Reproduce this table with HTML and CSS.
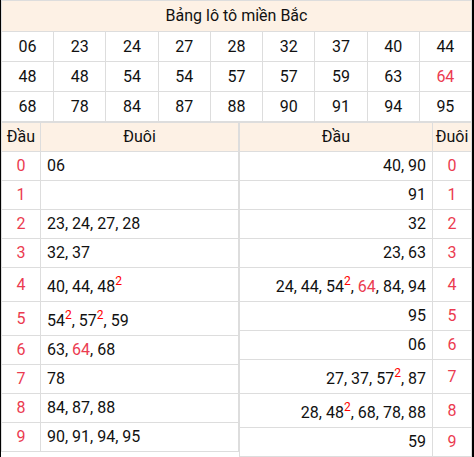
FILE: index.html
```html
<!doctype html>
<html lang="vi">
<head>
	<meta charset="UTF-8">
	<title>Bảng lô tô miền Bắc</title>
	<link rel="stylesheet" href="styles.css">
</head>
<body>
	<div class="loto">
		<table class="loto-grid">
			<tr><th colspan="9" class="loto-title">Bảng lô tô miền Bắc</th></tr>
			<tr><td>06</td><td>23</td><td>24</td><td>27</td><td>28</td><td>32</td><td>37</td><td>40</td><td>44</td></tr>
			<tr><td>48</td><td>48</td><td>54</td><td>54</td><td>57</td><td>57</td><td>59</td><td>63</td><td class="hot">64</td></tr>
			<tr><td>68</td><td>78</td><td>84</td><td>87</td><td>88</td><td>90</td><td>91</td><td>94</td><td>95</td></tr>
		</table>
		<div class="loto-split">
			<table class="loto-head">
				<tr><th class="digit">Đầu</th><th>Đuôi</th></tr>
				<tr><td class="digit">0</td><td>06</td></tr>
				<tr><td class="digit">1</td><td>&nbsp;</td></tr>
				<tr><td class="digit">2</td><td>23, 24, 27, 28</td></tr>
				<tr><td class="digit">3</td><td>32, 37</td></tr>
				<tr><td class="digit">4</td><td>40, 44, 48<sup>2</sup></td></tr>
				<tr><td class="digit">5</td><td>54<sup>2</sup>, 57<sup>2</sup>, 59</td></tr>
				<tr><td class="digit">6</td><td>63, <span class="hot">64</span>, 68</td></tr>
				<tr><td class="digit">7</td><td>78</td></tr>
				<tr><td class="digit">8</td><td>84, 87, 88</td></tr>
				<tr><td class="digit">9</td><td>90, 91, 94, 95</td></tr>
			</table>
			<table class="loto-tail">
				<tr><th>Đầu</th><th class="digit">Đuôi</th></tr>
				<tr><td>40, 90</td><td class="digit">0</td></tr>
				<tr><td>91</td><td class="digit">1</td></tr>
				<tr><td>32</td><td class="digit">2</td></tr>
				<tr><td>23, 63</td><td class="digit">3</td></tr>
				<tr><td>24, 44, 54<sup>2</sup>, <span class="hot">64</span>, 84, 94</td><td class="digit">4</td></tr>
				<tr><td>95</td><td class="digit">5</td></tr>
				<tr><td>06</td><td class="digit">6</td></tr>
				<tr><td>27, 37, 57<sup>2</sup>, 87</td><td class="digit">7</td></tr>
				<tr><td>28, 48<sup>2</sup>, 68, 78, 88</td><td class="digit">8</td></tr>
				<tr><td>59</td><td class="digit">9</td></tr>
			</table>
		</div>
	</div>
</body>
</html>
```

FILE: styles.css
```css
/*loto*/
*{margin: 0;padding: 0;}
body{background: #fff;}
.loto{width: 474px;box-sizing: border-box;border: solid #000;border-width: 0 2px 2px 1px;font-family: Roboto, "Liberation Sans", sans-serif;font-size: 16px;color: #111;}
.loto table{border-collapse: collapse;}
.loto th,.loto td{border: 1px solid #ddd;font-weight: normal;}
.loto th{background: #fdf1e5;}
.loto .hot{color: #eb3b50;}
.loto sup{color: #f00;font-size: 12px;line-height: 19px;vertical-align: 7px;}

.loto-grid{width: 100%;table-layout: fixed;}
.loto-grid td{text-align: center;padding: 5px 0;line-height: 19px;}
.loto-title{padding: 5px 0;line-height: 20px;}

.loto-split{display: flex;align-items: flex-start;}
.loto-split table td,.loto-split table th{padding: 4px 6px;line-height: 20px;}
.loto-head{width: 238px;}
.loto-tail{flex: 1;}
.loto-split .digit{width: 38px;text-align: center;color: #eb3b50;padding: 4px 0;}
.loto-split th.digit{color: #111;}
.loto-head td{text-align: left;}
.loto-tail td{text-align: right;}
.loto-tail th,.loto-head th{text-align: center;}
.loto-tail td.digit,.loto-head td.digit{text-align: center;}
```
